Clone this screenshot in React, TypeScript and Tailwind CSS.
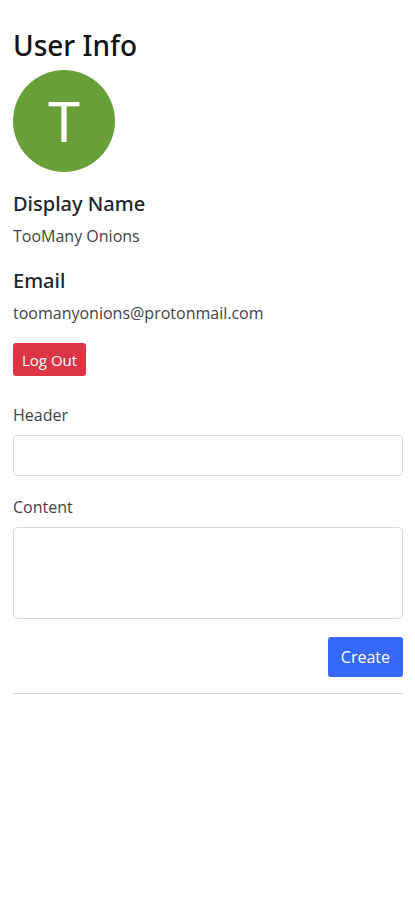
import React, { useState } from "react";

interface User {
  displayName: string;
  email: string;
}

const user: User = {
  displayName: "TooMany Onions",
  email: "toomanyonions@protonmail.com",
};

const UserInfo: React.FC<{ user: User }> = ({ user }) => {
  return (
    <section>
      <h1 className="mb-2 font-['Noto_Sans',sans-serif] text-[28px] leading-[34px] font-medium text-[#111315]">
        User Info
      </h1>
      <div className="flex size-[102px] items-center justify-center rounded-full bg-[#689f38] pt-1 font-['Roboto',sans-serif] text-[56px] leading-none text-white">
        {user.displayName.charAt(0)}
      </div>
      <h2 className="mt-4.5 font-['Noto_Sans',sans-serif] text-xl leading-7 font-medium text-[#212529]">
        Display Name
      </h2>
      <p className="mt-1.5 text-base leading-6">{user.displayName}</p>
      <h2 className="mt-[19px] font-['Noto_Sans',sans-serif] text-xl leading-7 font-medium text-[#212529]">
        Email
      </h2>
      <p className="mt-1.5 text-base leading-6">{user.email}</p>
      <button
        type="button"
        className="mt-4.5 h-[33px] rounded-[3px] bg-[#dc3545] px-[9px] text-[15px] leading-5 text-white hover:bg-[#bb2d3b]"
      >
        Log Out
      </button>
    </section>
  );
};

const PostForm: React.FC = () => {
  const [formData, setFormData] = useState({ header: "", content: "" });

  const handleChange = (
    e: React.ChangeEvent<HTMLInputElement | HTMLTextAreaElement>
  ) => {
    const { name, value } = e.target;
    setFormData({ ...formData, [name]: value });
  };

  const handleSubmit = (e: React.FormEvent) => {
    e.preventDefault();
    setFormData({ header: "", content: "" });
  };

  return (
    <form onSubmit={handleSubmit} className="mt-[27px]">
      <label htmlFor="header" className="block text-base leading-6">
        Header
      </label>
      <input
        id="header"
        name="header"
        type="text"
        value={formData.header}
        onChange={handleChange}
        className="mt-2 block h-[41px] w-full rounded border border-[#d6dadd] px-3"
      />
      <label htmlFor="content" className="mt-[19px] block text-base leading-6">
        Content
      </label>
      <textarea
        id="content"
        name="content"
        value={formData.content}
        onChange={handleChange}
        className="mt-2 block h-[92px] w-full resize-none rounded border border-[#d6dadd] px-3 py-2"
      />
      <div className="mt-4.5 flex justify-end">
        <button
          type="submit"
          className="h-10 rounded-[3px] bg-[#3668fc] px-[13px] text-base leading-6 text-white hover:bg-blue-700"
        >
          Create
        </button>
      </div>
    </form>
  );
};

const App: React.FC = () => {
  return (
    <main className="bg-white pt-7 pr-3 pb-6 pl-[13px] font-['Open_Sans',sans-serif] text-[#3f4347]">
      <UserInfo user={user} />
      <PostForm />
      <hr className="mt-4 border-[#cfd1d3]" />
    </main>
  );
};

export default App;
